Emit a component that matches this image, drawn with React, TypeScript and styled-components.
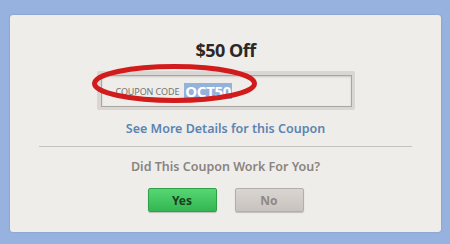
import React from "react";
import styled, { createGlobalStyle } from "styled-components";

const GlobalStyle = createGlobalStyle`
  html, body {
    margin: 0;
    padding: 0;
    background: #97b2df;
  }
  body {
    font-family: "Noto Sans", "Open Sans", sans-serif;
  }
`;

const Page = styled.div`
  width: 450px;
  height: 244px;
  box-sizing: border-box;
  padding: 15px 9px 12px 10px;
  background: #97b2df;
`;

const Card = styled.div`
  height: 100%;
  box-sizing: border-box;
  background: #efedea;
  border-radius: 3px;
  box-shadow: 0 0 2px rgba(60, 80, 120, 0.35);
  padding: 24px 29px 0 29px;
  display: flex;
  flex-direction: column;
  align-items: center;
`;

const Title = styled.h1`
  margin: 0;
  font-size: 18px;
  line-height: 22px;
  font-weight: 700;
  color: #2b2826;
  letter-spacing: -0.5px;
`;

const CodeWrap = styled.div`
  position: relative;
  margin-top: 10px;
`;

const CodeFrame = styled.div`
  width: 258px;
  height: 39px;
  box-sizing: border-box;
  padding: 4px 3px 3px 4px;
  background: #d9d6d3;
  border-radius: 2px;
`;

const CodeInput = styled.div`
  height: 100%;
  box-sizing: border-box;
  border: 1px solid #a9a5a1;
  background: #efedea;
  box-shadow: inset 0 1px 2px rgba(0, 0, 0, 0.15);
  display: flex;
  align-items: center;
  padding-left: 14px;
  gap: 5px;
`;

const CodeLabel = styled.span`
  font-size: 9px;
  color: #77716c;
  text-transform: uppercase;
  letter-spacing: -0.1px;
`;

const CodeValue = styled.span`
  font-size: 15px;
  line-height: 16px;
  font-weight: 700;
  color: #ffffff;
  background: #93b2dc;
  padding: 0 1px;
  letter-spacing: -0.3px;
`;

const Ring = styled.svg`
  position: absolute;
  left: -8px;
  top: -10px;
  pointer-events: none;
`;

const DetailsLink = styled.a`
  margin-top: 11px;
  font-size: 12.5px;
  line-height: 16px;
  font-weight: 600;
  color: #5a84b2;
  text-decoration: none;
  cursor: pointer;
`;

const Divider = styled.hr`
  align-self: stretch;
  margin: 9px 0 0 0;
  border: none;
  border-top: 1px solid #c4c1be;
`;

const Question = styled.p`
  margin: 12px 0 0 0;
  font-size: 12.5px;
  line-height: 16px;
  font-weight: 600;
  color: #8a847f;
`;

const ButtonRow = styled.div`
  display: flex;
  gap: 18px;
  margin-top: 13px;
`;

const VoteButton = styled.button<{ $variant: "yes" | "no" }>`
  width: 69px;
  height: 24px;
  border-radius: 2px;
  font-family: inherit;
  font-size: 12px;
  font-weight: 700;
  cursor: pointer;
  border: 1px solid
    ${(p) => (p.$variant === "yes" ? "#2f9f48" : "#b3aeaa")};
  background: ${(p) =>
    p.$variant === "yes"
      ? "linear-gradient(#56d774, #33b653)"
      : "linear-gradient(#d9d5d1, #c8c3bf)"};
  color: ${(p) => (p.$variant === "yes" ? "#1c3f22" : "#8f8984")};
  box-shadow: 0 1px 1px rgba(0, 0, 0, 0.2);
`;

export default function App() {
  return (
    <Page>
      <GlobalStyle />
      <Card>
        <Title>$50 Off</Title>
        <CodeWrap>
          <CodeFrame>
            <CodeInput>
              <CodeLabel>Coupon Code</CodeLabel>
              <CodeValue>OCT50</CodeValue>
            </CodeInput>
          </CodeFrame>
          <Ring width="172" height="46" viewBox="0 0 172 46">
            <ellipse
              cx="85.5"
              cy="22.5"
              rx="80"
              ry="17"
              fill="none"
              stroke="#d21c1c"
              strokeWidth="5"
            />
          </Ring>
        </CodeWrap>
        <DetailsLink>See More Details for this Coupon</DetailsLink>
        <Divider />
        <Question>Did This Coupon Work For You?</Question>
        <ButtonRow>
          <VoteButton $variant="yes">Yes</VoteButton>
          <VoteButton $variant="no">No</VoteButton>
        </ButtonRow>
      </Card>
    </Page>
  );
}
